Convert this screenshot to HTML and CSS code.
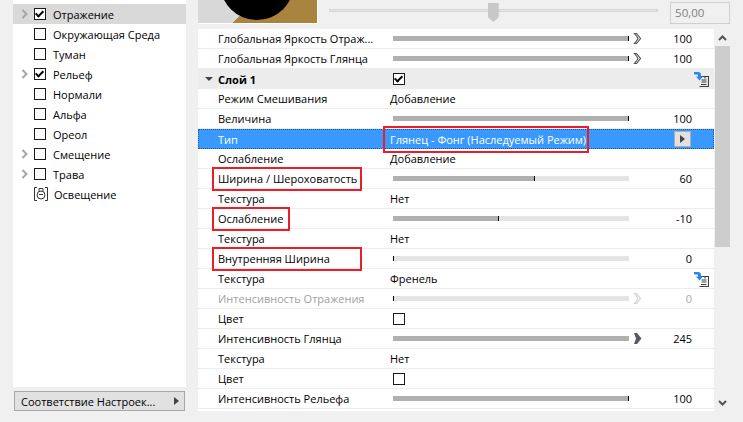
FILE: index.html
```html
<!DOCTYPE html>
<html lang="ru">
<head>
    <meta charset="UTF-8">
    <title>Настройки Материала</title>
    <link rel="stylesheet" href="styles.css">
</head>
<body>
    <svg class="defs" width="0" height="0">
        <symbol id="chev" viewBox="0 0 9 13"><path d="M1.5 1.5h2l4 5-4 5h-2l2-2.500 1.500-2.500-1.500-2.500z" fill="none" stroke="currentColor" stroke-width="1.200"/></symbol>
        <symbol id="chevfill" viewBox="0 0 9 13"><path d="M1 1h3l4.500 5.500L4 12H1l2-5.500z" fill="#555b60"/></symbol>
        <symbol id="link" viewBox="0 0 16 16"><path d="M6 5.500h9.500v10h-9M8.500 9h5M8.500 11h5M8 13.500h5.500M12 5.500v2" fill="none" stroke="#3b4045" stroke-width="1.100"/><path d="M1 1h4q3 0 3 3v1.500h2L6.500 9.500 3 5.500h2V4.500q0-1-1-1H1z" fill="#2b86f0"/></symbol>
        <symbol id="tree" viewBox="0 0 8 10"><path d="M1.500 1l4 4-4 4" fill="none" stroke="#a6a6a6" stroke-width="2"/></symbol>
    </svg>

    <div class="window">
        <aside class="sidebar">
            <ul class="tree">
                <li class="tree-item selected"><svg class="arrow"><use href="#tree"/></svg><span class="check on"></span>Отражение</li>
                <li class="tree-item"><span class="arrow"></span><span class="check"></span>Окружающая Среда</li>
                <li class="tree-item"><span class="arrow"></span><span class="check"></span>Туман</li>
                <li class="tree-item"><svg class="arrow"><use href="#tree"/></svg><span class="check on"></span>Рельеф</li>
                <li class="tree-item"><span class="arrow"></span><span class="check"></span>Нормали</li>
                <li class="tree-item"><span class="arrow"></span><span class="check"></span>Альфа</li>
                <li class="tree-item"><span class="arrow"></span><span class="check"></span>Ореол</li>
                <li class="tree-item"><svg class="arrow"><use href="#tree"/></svg><span class="check"></span>Смещение</li>
                <li class="tree-item"><svg class="arrow"><use href="#tree"/></svg><span class="check"></span>Трава</li>
                <li class="tree-item"><span class="arrow"></span>
                    <svg class="lamp" viewBox="0 0 14 14"><path d="M3 .5H.5v13H3M11 .5h2.500v13H11" fill="none" stroke="#333" /><circle cx="7" cy="8" r="4" fill="none" stroke="#333"/><path d="M5 4V1.500h4V4M5 8l1-1 1 1 1-1 1 1" fill="none" stroke="#333"/></svg>
                    Освещение</li>
            </ul>
            <button class="match-btn"><span>Соответствие Настроек...</span><i class="tri"></i></button>
        </aside>

        <main class="content">
            <div class="preview-bar">
                <div class="preview"><div class="ball"></div></div>
                <div class="preview-slider"><div class="preview-thumb"></div></div>
                <div class="preview-input">50,00</div>
            </div>

            <div class="props-wrap">
                <div class="props">
                    <div class="row"><span class="name">Глобальная Яркость Отраж...</span><div class="bar"><b class="fill full"></b></div><svg class="chev"><use href="#chev"/></svg><span class="num">100</span></div>
                    <div class="row"><span class="name">Глобальная Яркость Глянца</span><div class="bar"><b class="fill full"></b></div><svg class="chev"><use href="#chev"/></svg><span class="num">100</span></div>
                    <div class="row group"><i class="down"></i><span class="name">Слой 1</span><span class="check on"></span><svg class="link"><use href="#link"/></svg></div>
                    <div class="row"><span class="name">Режим Смешивания</span><span class="val">Добавление</span></div>
                    <div class="row"><span class="name">Величина</span><div class="bar"><b class="fill full"></b></div><span class="num">100</span></div>
                    <div class="row active"><span class="name">Тип</span><span class="val">Глянец - Фонг (Наследуемый Режим)</span><span class="more"><i class="tri"></i></span><span class="mark mark-type"></span></div>
                    <div class="row"><span class="name">Ослабление</span><span class="val">Добавление</span></div>
                    <div class="row"><span class="name">Ширина / Шероховатость</span><div class="bar"><b class="fill" style="width: 60%"></b></div><span class="num">60</span><span class="mark mark-width"></span></div>
                    <div class="row"><span class="name">Текстура</span><span class="val">Нет</span></div>
                    <div class="row"><span class="name">Ослабление</span><div class="bar"><b class="fill" style="width: 45%"></b></div><span class="num">-10</span><span class="mark mark-falloff"></span></div>
                    <div class="row"><span class="name">Текстура</span><span class="val">Нет</span></div>
                    <div class="row"><span class="name">Внутренняя Ширина</span><div class="bar"><b class="fill" style="width: 0"></b></div><span class="num">0</span><span class="mark mark-inner"></span></div>
                    <div class="row"><span class="name">Текстура</span><span class="val">Френель</span><svg class="link"><use href="#link"/></svg></div>
                    <div class="row off"><span class="name">Интенсивность Отражения</span><div class="bar"><b class="fill" style="width: 0"></b></div><svg class="chev"><use href="#chev"/></svg><span class="num">0</span></div>
                    <div class="row"><span class="name">Цвет</span><span class="check"></span></div>
                    <div class="row"><span class="name">Интенсивность Глянца</span><div class="bar"><b class="fill nomark full"></b></div><svg class="chev"><use href="#chevfill"/></svg><span class="num">245</span></div>
                    <div class="row"><span class="name">Текстура</span><span class="val">Нет</span></div>
                    <div class="row"><span class="name">Цвет</span><span class="check"></span></div>
                    <div class="row"><span class="name">Интенсивность Рельефа</span><div class="bar"><b class="fill full"></b></div><span class="num">100</span></div>
                </div>
                <div class="scroll">
                    <svg class="scroll-arrow" viewBox="0 0 9 6"><path d="M1 5l3.500-3.500L8 5" fill="none" stroke="#555" stroke-width="2"/></svg>
                    <div class="scroll-track"><div class="scroll-thumb"></div></div>
                    <svg class="scroll-arrow" viewBox="0 0 9 6"><path d="M1 1l3.500 3.500L8 1" fill="none" stroke="#555" stroke-width="2"/></svg>
                </div>
            </div>
        </main>
    </div>
</body>
</html>
```

FILE: styles.css
```css
html, body {
    margin: 0;
    height: 100%;
    overflow: hidden;
}
body {
    background-color: #f0f0f0;
    color: #000;
    font-family: 'Open Sans', 'Noto Sans', sans-serif;
    font-size: 11px;
}
.defs {
    position: absolute;
}
.window {
    display: flex;
    height: 422px;
}

/* left tree */
.sidebar {
    width: 173px;
    margin-left: 13px;
    display: flex;
    flex-direction: column;
}
.tree {
    list-style-type: none;
    margin: 0;
    padding: 4px 0 0;
    height: 383px;
    background-color: #fff;
}
.tree-item {
    height: 20px;
    display: flex;
    align-items: center;
}
.tree-item.selected {
    background-color: #d9d9d9;
}
.arrow {
    width: 8px;
    height: 10px;
    margin-left: 8px;
    margin-right: 5px;
}
.tree-item .check {
    margin-right: 7px;
}
.lamp {
    width: 14px;
    height: 14px;
    margin-right: 6px;
}
.check {
    display: inline-block;
    box-sizing: border-box;
    width: 12px;
    height: 12px;
    border: 1px solid #1a1a1a;
    background-color: #fff;
    position: relative;
}
.check.on::after {
    content: "";
    position: absolute;
    left: 2px;
    top: 0;
    width: 3px;
    height: 6px;
    border: solid #000;
    border-width: 0 2px 2px 0;
    transform: rotate(45deg);
}
.match-btn {
    box-sizing: border-box;
    width: 171px;
    height: 20px;
    margin: 4px 0 0 1px;
    padding: 0 5px 0 6px;
    display: flex;
    align-items: center;
    justify-content: space-between;
    border: 1px solid #a8a8a8;
    background-color: #e1e1e1;
    font: inherit;
    color: #000;
}
.tri {
    display: block;
    width: 0;
    height: 0;
    border-left: 5px solid #444;
    border-top: 4px solid transparent;
    border-bottom: 4px solid transparent;
}

/* right side */
.content {
    width: 532px;
    margin-left: 12px;
}
.preview-bar {
    height: 29px;
    display: flex;
    align-items: flex-start;
}
.preview {
    box-sizing: border-box;
    width: 120px;
    height: 24px;
    border-right: 1px solid #fff;
    border-bottom: 1px solid #fff;
    overflow: hidden;
    background:
        conic-gradient(from 45deg at 25px 32px, #a8843f 0 90deg, transparent 90deg 360deg),
        conic-gradient(from 45deg at 94px 32px, #a8843f 0 90deg, transparent 90deg 360deg),
        #d8d8d8;
    position: relative;
}
.ball {
    width: 74px;
    height: 74px;
    border-radius: 50%;
    background-color: #000;
    margin: -54px 0 0 22px;
}
.preview-slider {
    width: 330px;
    height: 3px;
    margin: 9px 0 0 11px;
    box-sizing: border-box;
    border: 1px solid #d4d4d4;
    background-color: #e6e6e6;
    position: relative;
}
.preview-thumb {
    position: absolute;
    left: 158px;
    top: -7px;
    width: 11px;
    height: 13px;
    background-color: #c8c8c8;
    clip-path: polygon(0 0, 100% 0, 100% 75%, 50% 100%, 0 75%);
    padding-bottom: 6px;
}
.preview-input {
    box-sizing: border-box;
    width: 60px;
    height: 22px;
    margin: 2px 0 0 12px;
    padding: 0 0 0 4px;
    border: 1px solid #d0d0d0;
    line-height: 20px;
    font-size: 11.500px;
    color: #808080;
}
.props-wrap {
    display: flex;
    height: 382px;
}
.props {
    width: 516px;
    padding-bottom: 2px;
    background-color: #fff;
    box-sizing: border-box;
    border-left: 0;
}
.row {
    box-sizing: border-box;
    height: 20px;
    display: flex;
    align-items: center;
    border-bottom: 1px solid #ececec;
    position: relative;
}
.name {
    box-sizing: border-box;
    width: 192px;
    padding-left: 20px;
    flex: none;
}
.val {
    margin-left: 0;
}
.row > .check {
    margin-left: 3px;
}
.bar {
    width: 236px;
    height: 5px;
    margin-left: 3px;
    background-color: #e4e4e4;
}
.fill {
    display: block;
    height: 5px;
    background-color: #b0b0b0;
    border-right: 1px solid #000;
    box-sizing: border-box;
}
.fill.full {
    width: 100%;
}
.fill.nomark {
    border-right: 0;
}
.chev {
    width: 9px;
    height: 13px;
    margin-left: 4px;
    color: #555;
}
.num {
    position: absolute;
    right: 22px;
}
.link {
    position: absolute;
    right: 5px;
    top: 2px;
    width: 16px;
    height: 16px;
}
.group {
    background-color: #ececec;
    font-weight: 700;
    border-bottom: 0;
}
.group .name {
    width: 192px;
}
.down {
    position: absolute;
    left: 7px;
    top: 8px;
    width: 0;
    height: 0;
    border-top: 4px solid #444;
    border-left: 4px solid transparent;
    border-right: 4px solid transparent;
}
.active {
    background-color: #3a99ff;
    color: #fff;
    border-bottom: 0;
    outline: 1px dotted #1a5fa8;
    outline-offset: -1px;
}
.more {
    position: absolute;
    right: 23px;
    top: 2px;
    box-sizing: border-box;
    width: 17px;
    height: 16px;
    display: flex;
    align-items: center;
    justify-content: center;
    background-color: #e1e1e1;
    border: 1px solid #adadad;
}
.off {
    color: #a0a0a0;
}
.off .chev, .off .num {
    color: #a8a8a8;
}
.off .chev {
    opacity: .5;
}

/* red annotation frames */
.mark {
    position: absolute;
    box-sizing: border-box;
    border: 2px solid #ee1c25;
    pointer-events: none;
}
.mark-type {
    left: 185px;
    top: -3px;
    width: 206px;
    height: 27px;
}
.mark-width {
    left: 14px;
    top: -2px;
    width: 150px;
    height: 24px;
}
.mark-falloff {
    left: 14px;
    top: -2px;
    width: 78px;
    height: 24px;
}
.mark-inner {
    left: 14px;
    top: -2px;
    width: 150px;
    height: 24px;
}

/* scrollbar */
.scroll {
    width: 15px;
    margin-left: 1px;
    display: flex;
    flex-direction: column;
    align-items: center;
}
.scroll-arrow {
    width: 9px;
    height: 6px;
    flex: none;
    margin: 6px 0 5px;
}
.scroll-track {
    flex: 1;
    width: 15px;
}
.scroll-thumb {
    height: 201px;
    background-color: #cdcdcd;
}
```
